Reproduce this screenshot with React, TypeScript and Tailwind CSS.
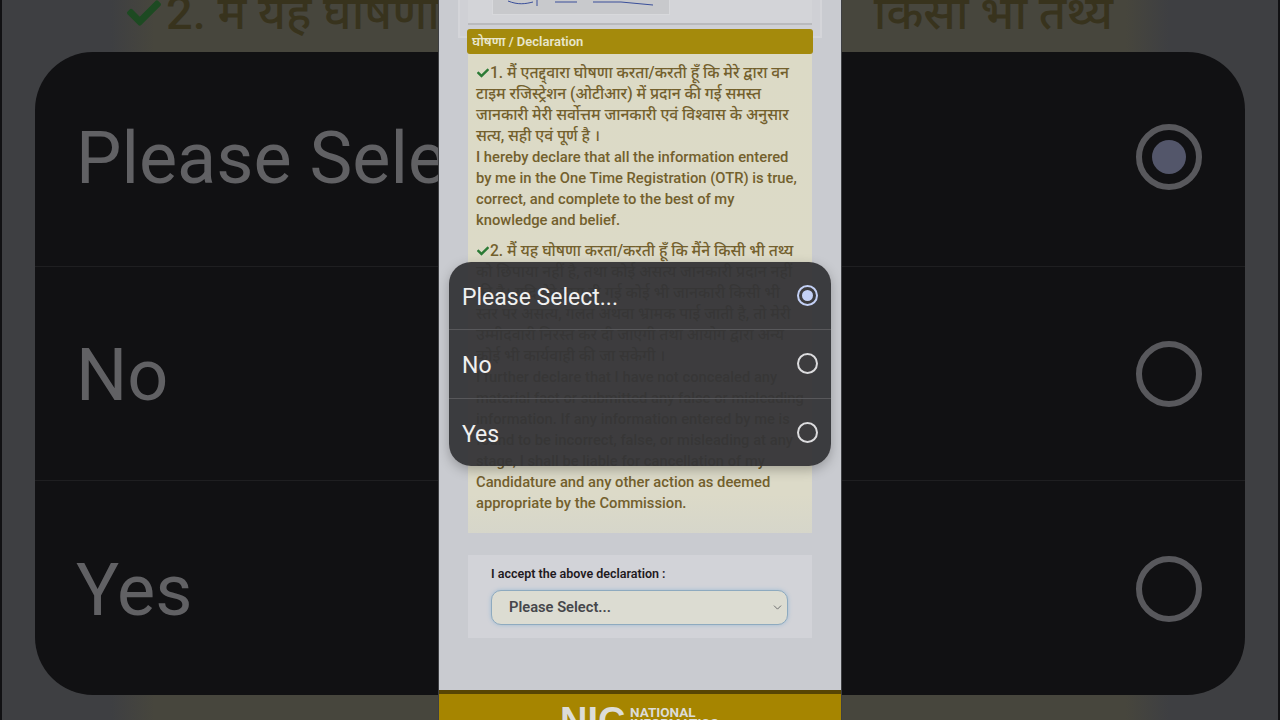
import React from "react";
import { FaCheck } from "react-icons/fa";
import { ChevronDown } from "lucide-react";

const options = ["Please Select...", "No", "Yes"];
const devanagari = "font-['Roboto','Noto_Sans','Noto_Sans_Devanagari','Lohit_Devanagari','DejaVu_Sans',sans-serif]";

function BigRow({ label, index, side }: any) {
  const nudge = index === 0 ? "-translate-y-[2px]" : index === 2 ? "translate-y-[1px]" : "";
  return (
    <div className={`flex-1 flex items-center ${index === 2 ? "" : "border-b border-[#1f1f21]"} ${side === "left" ? "pl-[41px]" : "justify-end pr-[43px]"}`}>
      {side === "left" ? (
        <span className={`text-[72px] leading-none pt-[4px] text-[#616164] whitespace-nowrap font-['Roboto',sans-serif] ${nudge}`}>{label}</span>
      ) : (
        <div className={`w-[66px] h-[66px] rounded-full border-[6px] border-[#58585c] flex items-center justify-center ${nudge}`}>
          {index === 0 && <div className="w-[34px] h-[34px] rounded-full bg-[#53566a]" />}
        </div>
      )}
    </div>
  );
}

function SidePanel({ side }: { side: "left" | "right" }) {
  const isLeft = side === "left";
  return (
    <div className={`w-[438px] h-[720px] flex flex-col overflow-hidden bg-[#3e3f42] ${isLeft ? "border-l-2 border-[#111113]" : "border-r-2 border-[#111113]"}`}>
      <div className={`h-[52px] shrink-0 flex items-end overflow-hidden text-[47px] leading-[52px] font-medium text-[#38331d] whitespace-nowrap ${devanagari} ${isLeft ? "bg-[linear-gradient(90deg,#3e3f42_25%,#47463d_35%)] pl-[122px]" : "bg-[linear-gradient(270deg,#3e3f42_25%,#47463d_35%)] justify-end pr-[165px]"}`}>
        {isLeft ? (
          <span className="flex items-center gap-[2px] -translate-y-[13px]">
            <FaCheck className="text-[#1d4a22] w-[40px] h-[34px]" />
            2. मैं यह घोषणा
          </span>
        ) : (
          <span className="-translate-y-[13px]">किसी भी तथ्य</span>
        )}
      </div>
      <div className={`h-[643px] shrink-0 flex flex-col bg-[#111113] ${isLeft ? "ml-[33px] rounded-l-[58px]" : "mr-[33px] rounded-r-[58px]"}`}>
        {options.map((o, i) => (
          <BigRow key={o} label={o} index={i} side={side} />
        ))}
      </div>
      <div className={`flex-1 ${isLeft ? "bg-[linear-gradient(90deg,#3e3f42_25%,#47463d_35%)]" : "bg-[linear-gradient(270deg,#3e3f42_25%,#47463d_35%)]"}`} />
    </div>
  );
}

function Radio({ selected }: { selected?: boolean }) {
  return (
    <div className={`w-[21px] h-[21px] rounded-full border-2 flex items-center justify-center ${selected ? "border-[#c3d0f5]" : "border-[#dcdcde]"}`}>
      {selected && <div className="w-[11px] h-[11px] rounded-full bg-[#c3d0f5]" />}
    </div>
  );
}

function Hi({ children }: { children: React.ReactNode }) {
  return <span className="text-[15.6px]">{children}</span>;
}

function Center() {
  return (
    <div className={`relative w-[404px] h-[720px] shrink-0 flex flex-col overflow-hidden bg-[#c9cbd0] border-x border-[#3e3f42] ${devanagari}`}>
      {/* top of the previous card, cut off by the scroll */}
      <div className="h-[38px] shrink-0 mx-[19px] bg-[#cfd0d5] border-x-2 border-b-2 border-[#d4d5d9] px-[8px]">
        <div className="h-[25px] bg-[#d3d4d8] border-b-2 border-[#b9babd] pl-[24px]">
          <div className="w-[178px] h-[15px] bg-[#c8c9cc] border-x border-b border-[#d8d9dc] overflow-hidden">
            <svg width="178" height="15" viewBox="0 0 178 15">
              <path d="M15 1 C25 5 32 4 40 2 M44 0 L44 6 M62 2 L84 2 M100 2 L128 2 L160 5" stroke="#3a4f9a" strokeWidth="1" fill="none" />
            </svg>
          </div>
        </div>
      </div>
      <div className="-mt-[9px] mx-[28px] h-[25px] shrink-0 relative rounded-[3px] bg-[#a48a0c] px-[5px] flex items-center text-[13px] font-semibold text-[#e8e6cc]">
        घोषणा / Declaration
      </div>
      <div className="mx-[29px] h-[479px] shrink-0 bg-[linear-gradient(180deg,#dcdac6_0%,#dcdac8_92%,#d6d6ca_100%)] pl-[8px] pr-[8px] pt-[9px] text-[14.75px] leading-[21px] font-medium text-[#73602d]">
        <p>
          <FaCheck className="inline w-[14px] h-[12px] text-[#2b7a35] align-[-1px]" />
          <Hi>1. मैं एतद्द्वारा घोषणा करता/करती हूँ कि मेरे द्वारा वन टाइम रजिस्ट्रेशन (ओटीआर) में प्रदान की गई समस्त जानकारी मेरी सर्वोत्तम जानकारी एवं विश्वास के अनुसार सत्य, सही एवं पूर्ण है ।</Hi>
          <br />
          I hereby declare that all the information entered by me in the One Time Registration (OTR) is true, correct, and complete to the best of my knowledge and belief.
        </p>
        <p className="mt-[10px]">
          <FaCheck className="inline w-[14px] h-[12px] text-[#2b7a35] align-[-1px]" />
          <Hi>2. मैं यह घोषणा करता/करती हूँ कि मैंने किसी भी तथ्य को छिपाया नहीं है, तथा कोई असत्य जानकारी प्रदान नहीं की है। यदि मेरे द्वारा दी गई कोई भी जानकारी किसी भी स्तर पर असत्य, गलत अथवा भ्रामक पाई जाती है, तो मेरी उम्मीदवारी निरस्त कर दी जाएगी तथा आयोग द्वारा अन्य कोई भी कार्यवाही की जा सकेगी ।</Hi>
          <br />
          I further declare that I have not concealed any
          <br />
          material fact or submitted any false or misleading
          <br />
          information. If any information entered by me is
          <br />
          found to be incorrect, false, or misleading at any
          <br />
          stage, I shall be liable for cancellation of my
          <br />
          Candidature and any other action as deemed
          <br />
          appropriate by the Commission.
        </p>
      </div>
      <div className="mt-[22px] mx-[29px] h-[83px] shrink-0 bg-[#d2d3d8] px-[23px] pt-[11px]">
        <div className="text-[12.5px] leading-[16px] font-semibold text-[#1f1a1e]">I accept the above declaration :</div>
        <div className="mt-[8px] h-[35px] w-[297px] rounded-[10px] border border-[#8eaabf] bg-[#dcdcd2] shadow-[0_0_4px_#9fbcd4] pl-[17px] pr-[3px] flex items-center justify-between text-[14.7px] font-semibold text-[#46474b]">
          Please Select...
          <ChevronDown className="w-[13px] h-[13px] text-[#55565a]" strokeWidth={1.5} />
        </div>
      </div>
      <div className="mt-[52px] flex-1 border-t-[4px] border-[#574503] bg-[#a68500] flex justify-center gap-[8px] pt-[12px] overflow-hidden">
        <div className="text-[38px] leading-[30px] font-black w-[62px] text-center text-[#dcdcd8] font-['Liberation_Sans',sans-serif]">NIC</div>
        <div className="text-[13.5px] leading-[11px] font-bold text-[#dcdcd8] mt-[1px] w-[90px]">
          NATIONAL
          <br />
          INFORMATICS
        </div>
      </div>

      {/* native select sheet */}
      <div className="absolute left-[10px] top-[262px] w-[382px] h-[204px] rounded-[22px] bg-[#343437]/95 shadow-[0_4px_12px_rgba(0,0,0,0.25)] flex flex-col">
        {options.map((o, i) => (
          <div key={o} className={`flex-1 flex items-center justify-between px-[13px] ${i < 2 ? "border-b border-[#58585b]" : ""}`}>
            <span className="text-[23px] pt-[5px] text-[#f0f0f0] font-['Roboto',sans-serif]">{o}</span>
            <Radio selected={i === 0} />
          </div>
        ))}
      </div>
    </div>
  );
}

export default function App() {
  return (
    <div className="w-[1280px] h-[720px] flex overflow-hidden bg-black">
      <SidePanel side="left" />
      <Center />
      <SidePanel side="right" />
    </div>
  );
}
